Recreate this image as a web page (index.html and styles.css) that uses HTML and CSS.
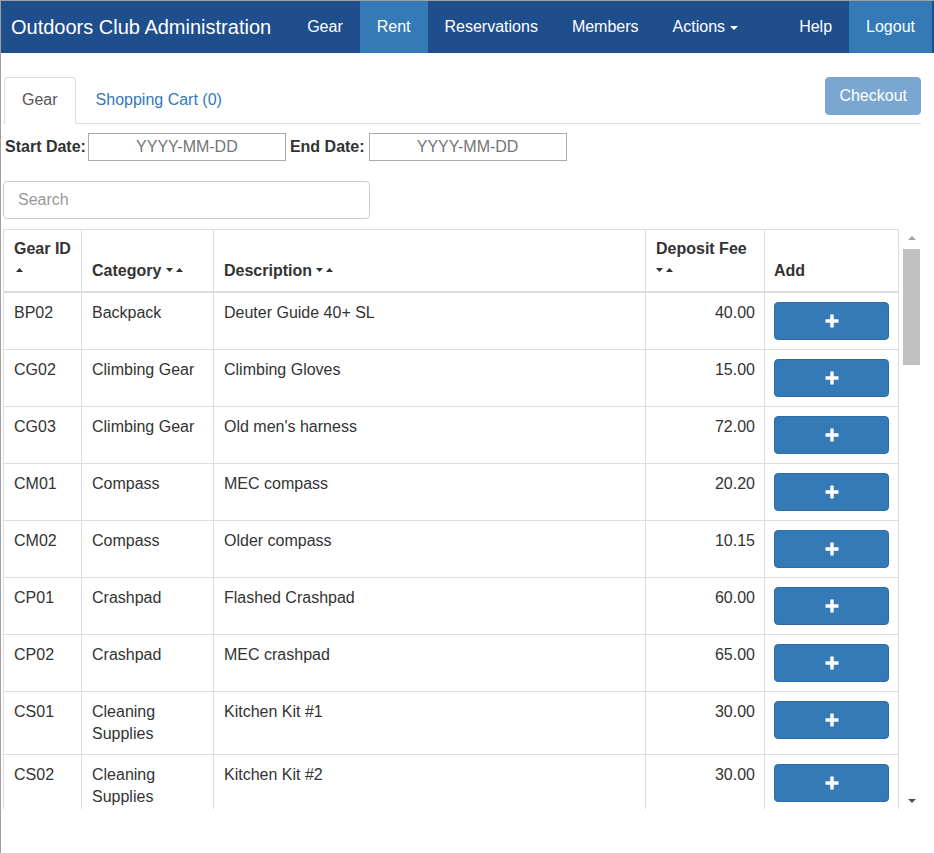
FILE: index.html
```html
<!DOCTYPE html>
<html lang="en">
<head>
<meta charset="utf-8">
<title>Outdoors Club Administration</title>
<link rel="stylesheet" href="styles.css">
</head>
<body>
<div class="frame">
  <nav class="navbar">
    <a class="brand" href="#">Outdoors Club Administration</a>
    <ul class="nav">
      <li><a href="#">Gear</a></li>
      <li class="active"><a href="#">Rent</a></li>
      <li><a href="#">Reservations</a></li>
      <li><a href="#">Members</a></li>
      <li><a href="#">Actions <span class="caret"></span></a></li>
    </ul>
    <ul class="nav nav-right">
      <li><a href="#">Help</a></li>
      <li class="active"><a href="#">Logout</a></li>
    </ul>
  </nav>

  <main class="content">
    <div class="tabbar">
      <ul class="tabs">
        <li class="tab active"><a href="#">Gear</a></li>
        <li class="tab"><a href="#">Shopping Cart (0)</a></li>
      </ul>
      <button class="btn-checkout" disabled>Checkout</button>
    </div>

    <div class="dates">
      <label class="date-label first">Start Date:</label>
      <input class="date-input" type="text" placeholder="YYYY-MM-DD">
      <label class="date-label">End Date:</label>
      <input class="date-input" type="text" placeholder="YYYY-MM-DD">
    </div>

    <input class="search" type="text" placeholder="Search">

    <div class="table-wrap">
      <div class="viewport">
        <table class="gear-table">
          <colgroup>
            <col class="c-id"><col class="c-cat"><col class="c-desc"><col class="c-fee"><col class="c-add">
          </colgroup>
          <thead>
            <tr>
              <th>Gear ID <svg class="sort one" width="7" height="4" viewBox="0 0 7 4"><path d="M0 4L3.5 0L7 4Z" fill="#333"/></svg></th>
              <th>Category <svg class="sort" width="17" height="4" viewBox="0 0 17 4"><path d="M0 0H7L3.5 4Z M10 4L13.5 0L17 4Z" fill="#333"/></svg></th>
              <th>Description <svg class="sort" width="17" height="4" viewBox="0 0 17 4"><path d="M0 0H7L3.5 4Z M10 4L13.5 0L17 4Z" fill="#333"/></svg></th>
              <th>Deposit Fee <svg class="sort" width="17" height="4" viewBox="0 0 17 4"><path d="M0 0H7L3.5 4Z M10 4L13.5 0L17 4Z" fill="#333"/></svg></th>
              <th class="add-col">Add</th>
            </tr>
          </thead>
          <tbody>
            <tr><td>BP02</td><td>Backpack</td><td>Deuter Guide 40+ SL</td><td class="num">40.00</td><td class="add-col"><button class="btn-add"><svg width="14" height="14" viewBox="0 0 14 14"><path d="M7 0.5V13.5M0.5 7H13.5" stroke="#fff" stroke-width="3.4"/></svg></button></td></tr>
            <tr><td>CG02</td><td>Climbing Gear</td><td>Climbing Gloves</td><td class="num">15.00</td><td class="add-col"><button class="btn-add"><svg width="14" height="14" viewBox="0 0 14 14"><path d="M7 0.5V13.5M0.5 7H13.5" stroke="#fff" stroke-width="3.4"/></svg></button></td></tr>
            <tr><td>CG03</td><td>Climbing Gear</td><td>Old men's harness</td><td class="num">72.00</td><td class="add-col"><button class="btn-add"><svg width="14" height="14" viewBox="0 0 14 14"><path d="M7 0.5V13.5M0.5 7H13.5" stroke="#fff" stroke-width="3.4"/></svg></button></td></tr>
            <tr><td>CM01</td><td>Compass</td><td>MEC compass</td><td class="num">20.20</td><td class="add-col"><button class="btn-add"><svg width="14" height="14" viewBox="0 0 14 14"><path d="M7 0.5V13.5M0.5 7H13.5" stroke="#fff" stroke-width="3.4"/></svg></button></td></tr>
            <tr><td>CM02</td><td>Compass</td><td>Older compass</td><td class="num">10.15</td><td class="add-col"><button class="btn-add"><svg width="14" height="14" viewBox="0 0 14 14"><path d="M7 0.5V13.5M0.5 7H13.5" stroke="#fff" stroke-width="3.4"/></svg></button></td></tr>
            <tr><td>CP01</td><td>Crashpad</td><td>Flashed Crashpad</td><td class="num">60.00</td><td class="add-col"><button class="btn-add"><svg width="14" height="14" viewBox="0 0 14 14"><path d="M7 0.5V13.5M0.5 7H13.5" stroke="#fff" stroke-width="3.4"/></svg></button></td></tr>
            <tr><td>CP02</td><td>Crashpad</td><td>MEC crashpad</td><td class="num">65.00</td><td class="add-col"><button class="btn-add"><svg width="14" height="14" viewBox="0 0 14 14"><path d="M7 0.5V13.5M0.5 7H13.5" stroke="#fff" stroke-width="3.4"/></svg></button></td></tr>
            <tr><td>CS01</td><td>Cleaning Supplies</td><td>Kitchen Kit #1</td><td class="num">30.00</td><td class="add-col"><button class="btn-add"><svg width="14" height="14" viewBox="0 0 14 14"><path d="M7 0.5V13.5M0.5 7H13.5" stroke="#fff" stroke-width="3.4"/></svg></button></td></tr>
            <tr><td>CS02</td><td>Cleaning Supplies</td><td>Kitchen Kit #2</td><td class="num">30.00</td><td class="add-col"><button class="btn-add"><svg width="14" height="14" viewBox="0 0 14 14"><path d="M7 0.5V13.5M0.5 7H13.5" stroke="#fff" stroke-width="3.4"/></svg></button></td></tr>
          </tbody>
        </table>
      </div>
      <div class="scrollbar">
        <div class="sb-btn"><span class="sb-up"></span></div>
        <div class="sb-track"><div class="sb-thumb"></div></div>
        <div class="sb-btn"><span class="sb-down"></span></div>
      </div>
    </div>
  </main>
</div>
</body>
</html>
```

FILE: styles.css
```css
* { box-sizing: border-box; }

html, body {
  margin: 0;
  padding: 0;
  background: #fff;
}

body {
  font-family: "Liberation Sans", Arial, sans-serif;
  font-size: 16px;
  line-height: 22px;
  color: #333;
}

.frame {
  border-top: 1px solid #a0a0a0;
  border-left: 1px solid #a0a0a0;
  min-height: 853px;
}

/* navbar */
.navbar {
  display: flex;
  height: 52px;
  background: #1f4e8d;
  padding-right: 2px;
}

.brand {
  display: flex;
  align-items: center;
  padding: 0 19px 1px 10px;
  font-size: 20px;
  color: #fff;
  text-decoration: none;
}

.nav {
  display: flex;
  list-style: none;
  margin: 0;
  padding: 0;
}

.nav-right {
  margin-left: auto;
}

.nav li a {
  display: flex;
  align-items: center;
  height: 100%;
  padding: 0 17px 1px;
  color: #fff;
  text-decoration: none;
  font-size: 16px;
}

.nav li.active a {
  background: #337ab7;
}

.caret {
  display: inline-block;
  width: 0;
  height: 0;
  margin-left: 5px;
  border-top: 4px solid #fff;
  border-left: 4px solid transparent;
  border-right: 4px solid transparent;
  margin-top: 2px;
}

/* content */
.content {
  padding: 24px 13px 0 2px;
}

.tabbar {
  display: flex;
  align-items: flex-start;
  border-bottom: 1px solid #ddd;
  padding-left: 1px;
}

.tabs {
  display: flex;
  list-style: none;
  margin: 0;
  padding: 0;
}

.tab a {
  display: block;
  padding: 11px 17px 12px;
  border: 1px solid transparent;
  border-radius: 4px 4px 0 0;
  margin-bottom: -1px;
  color: #337ab7;
  text-decoration: none;
}

.tab.active a {
  color: #555;
  background: #fff;
  border-color: #ddd #ddd transparent #ddd;
}

.tab + .tab a {
  padding-left: 19px;
}

.btn-checkout {
  margin-left: auto;
  height: 38px;
  padding: 0 13px;
  border: 1px solid #7ba5cd;
  border-radius: 4px;
  background: #7aa7d2;
  color: #fff;
  font-family: inherit;
  font-size: 16px;
}

.dates {
  display: flex;
  align-items: center;
  margin-top: 9px;
}

.date-label {
  font-weight: bold;
  margin: 0 4px 0 4px;
}

.date-label.first {
  margin: 0 2px 0 2px;
}

.date-input {
  width: 198px;
  height: 28px;
  border: 1px solid #a9a9a9;
  padding: 0 6px;
  font-family: inherit;
  font-size: 16px;
  text-align: center;
  color: #333;
}

.date-input::placeholder {
  color: #757575;
}

.search {
  display: block;
  margin: 20px 0 0 0;
  width: 367px;
  height: 38px;
  border: 1px solid #ccc;
  border-radius: 4px;
  padding: 0 14px;
  font-family: inherit;
  font-size: 16px;
  color: #555;
}

.search::placeholder {
  color: #999;
}

/* table with scrollbar */
.table-wrap {
  display: flex;
  margin-top: 10px;
  height: 580px;
}

.viewport {
  width: 898px;
  height: 580px;
  overflow: hidden;
}

.gear-table {
  width: 896px;
  table-layout: fixed;
  border-collapse: collapse;
  border: 1px solid #ddd;
}

.c-id { width: 78px; }
.c-cat { width: 132px; }
.c-desc { width: 432px; }
.c-fee { width: 119px; }
.c-add { width: 134px; }

.gear-table th,
.gear-table td {
  border: 1px solid #ddd;
  padding: 9px 9px 9px 10px;
  text-align: left;
}

.gear-table .add-col {
  padding-left: 9px;
}

.gear-table th {
  vertical-align: bottom;
  font-weight: bold;
  border-bottom: 2px solid #ddd;
  padding-top: 8px;
  padding-bottom: 9px;
}

.gear-table td {
  vertical-align: top;
}

.gear-table td.num {
  text-align: right;
}

.sort {
  display: inline-block;
  vertical-align: 4px;
}

.sort.one {
  margin-left: 2px;
}

.btn-add {
  display: flex;
  align-items: center;
  justify-content: center;
  width: 115px;
  height: 38px;
  padding: 0;
  border: 1px solid #2e6da4;
  border-radius: 4px;
  background: #337ab7;
}

.scrollbar {
  display: flex;
  flex-direction: column;
  width: 17px;
  margin-left: 2px;
  background: #fff;
}

.sb-btn {
  height: 17px;
  display: flex;
  align-items: center;
  justify-content: center;
}

.sb-up,
.sb-down {
  width: 0;
  height: 0;
  border-left: 4px solid transparent;
  border-right: 4px solid transparent;
}

.sb-up {
  border-bottom: 4px solid #a3a3a3;
}

.sb-down {
  border-top: 4px solid #505050;
}

.sb-track {
  flex: 1;
}

.sb-thumb {
  height: 116px;
  margin-top: 3px;
  background: #c1c1c1;
}
```
